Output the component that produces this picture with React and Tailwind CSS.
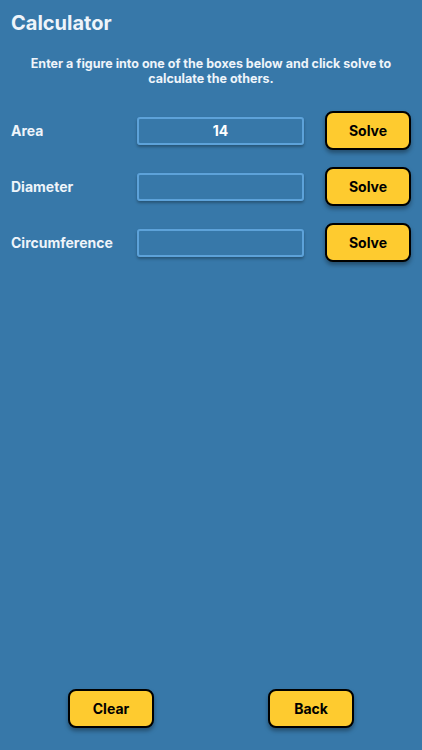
export default function App() {
  const rows = [
    { label: "Area", value: "14" },
    { label: "Diameter", value: "" },
    { label: "Circumference", value: "" },
  ];
  return (
    <div
      className="h-[750px] w-full bg-[#3778a9] flex flex-col text-white"
      style={{ fontFamily: "Inter, 'Liberation Sans', sans-serif" }}
    >
      <h1 className="pl-[11px] pt-[10px] text-[20px] leading-[26px] font-bold text-[#eef4fa]">
        Calculator
      </h1>
      <p className="mt-[20px] px-6 text-center text-[12.5px] leading-[15px] font-bold text-[#eef4fa]">
        Enter a figure into one of the boxes below and click solve to calculate the others.
      </p>
      <div className="mt-[25px] flex flex-col gap-[17px]">
        {rows.map((r) => (
          <div key={r.label} className="flex items-center pl-[11px] pr-[11px]">
            <span className="w-[126px] text-[14px] font-bold text-[#eef4fa]">{r.label}</span>
            <div className="w-[167px] h-[28px] border-2 border-[#5da2d9] rounded-[3px] shadow-[0_2px_3px_rgba(0,0,0,0.3)] flex items-center justify-center text-[14px] font-bold">
              {r.value}
            </div>
            <button className="ml-auto w-[86px] h-[39px] bg-[#fecb2f] border-2 border-black rounded-[8px] shadow-[0_3px_4px_rgba(0,0,0,0.35)] text-black text-[14px] font-bold">
              Solve
            </button>
          </div>
        ))}
      </div>
      <div className="mt-auto mb-[22px] flex justify-between pl-[68px] pr-[68px]">
        <button className="w-[86px] h-[39px] bg-[#fecb2f] border-2 border-black rounded-[8px] shadow-[0_3px_4px_rgba(0,0,0,0.35)] text-black text-[14px] font-bold">
          Clear
        </button>
        <button className="w-[86px] h-[39px] bg-[#fecb2f] border-2 border-black rounded-[8px] shadow-[0_3px_4px_rgba(0,0,0,0.35)] text-black text-[14px] font-bold">
          Back
        </button>
      </div>
    </div>
  );
}
